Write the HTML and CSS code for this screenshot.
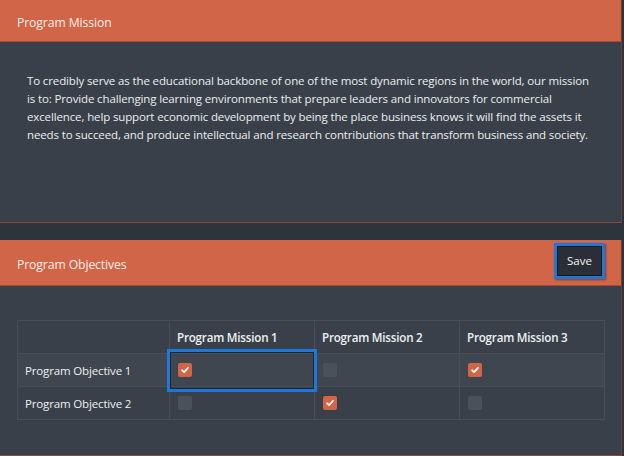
FILE: index.html
```html
<!DOCTYPE html>
<html>
<head>
<meta charset="utf-8">
<link rel="stylesheet" href="styles.css">
</head>
<body>
<div class="page">
  <section class="panel panel-mission">
    <header class="panel-head"><h2 class="panel-title">Program Mission</h2></header>
    <div class="panel-body mission-body">
      <p class="mission-text">To credibly serve as the educational backbone of one of the most dynamic regions in the world, our mission is to: Provide challenging learning environments that prepare leaders and innovators for commercial excellence, help support economic development by being the place business knows it will find the assets it needs to succeed, and produce intellectual and research contributions that transform business and society.</p>
    </div>
  </section>
  <section class="panel panel-objectives">
    <header class="panel-head head-with-btn">
      <h2 class="panel-title">Program Objectives</h2>
      <button class="save-btn">Save</button>
    </header>
    <div class="panel-body objectives-body">
      <table class="matrix">
        <thead>
          <tr>
            <th class="corner"></th>
            <th>Program Mission 1</th>
            <th>Program Mission 2</th>
            <th>Program Mission 3</th>
          </tr>
        </thead>
        <tbody>
          <tr class="row-alt">
            <td class="label">Program Objective 1</td>
            <td class="hl-cell"><span class="cb on"><svg viewBox="0 0 14 14"><path d="M4.2 7.3 L6.1 9.1 L9.9 5.0" /></svg></span><span class="highlight"></span></td>
            <td><span class="cb"></span></td>
            <td><span class="cb on"><svg viewBox="0 0 14 14"><path d="M4.2 7.3 L6.1 9.1 L9.9 5.0" /></svg></span></td>
          </tr>
          <tr>
            <td class="label">Program Objective 2</td>
            <td><span class="cb"></span></td>
            <td><span class="cb on"><svg viewBox="0 0 14 14"><path d="M4.2 7.3 L6.1 9.1 L9.9 5.0" /></svg></span></td>
            <td><span class="cb"></span></td>
          </tr>
        </tbody>
      </table>
    </div>
  </section>
</div>
</body>
</html>
```
FILE: styles.css
```css
* { box-sizing: border-box; }
html, body { margin: 0; padding: 0; }
body {
  background: #2e343c;
  font-family: "Open Sans", "Noto Sans", sans-serif;
  color: #eef0f2;
  width: 624px;
  height: 456px;
  overflow: hidden;
}
.page {
  display: flex;
  flex-direction: column;
  gap: 17px;
  width: 622px;
}
.panel {
  background: #394049;
  border-right: 1px solid #6b4137;
  border-bottom: 1px solid #8a4c3d;
}
.panel-head {
  background: #d16548;
  border-bottom: 1px solid #a44c36;
  display: flex;
  align-items: center;
  padding: 0 17px;
}
.panel-mission .panel-head { height: 42px; padding-top: 4px; }
.panel-title {
  margin: 0;
  font-size: 12.2px;
  letter-spacing: -0.1px;
  font-weight: 400;
  color: #fbeee9;
}
.head-with-btn {
  height: 46px;
  justify-content: space-between;
  padding-right: 17px;
  padding-top: 3px;
}
.save-btn {
  font-family: "Open Sans", "Noto Sans", sans-serif;
  font-size: 11.5px;
  color: #f2f3f4;
  background: #2a2f37;
  border: 3px solid #1f78d8;
  box-shadow: inset 0 0 0 1px #15181c, 1px 1px 2px rgba(0,0,0,0.4);
  width: 51px;
  height: 36px;
  padding: 0;
  margin-top: -7px;
  margin-right: -1px;
}
.mission-body {
  height: 180px;
  padding: 30px 27px 0 27px;
}
.mission-text {
  margin: 0;
  font-size: 11.5px;
  letter-spacing: -0.13px;
  line-height: 18px;
  color: #eceef0;
  width: 568px;
}
.objectives-body {
  height: 169px;
  padding: 34px 17px 0 17px;
}
.matrix {
  border-collapse: collapse;
  width: 588px;
  table-layout: fixed;
}
.matrix th, .matrix td {
  border: 1px solid #474e58;
  height: 33px;
  text-align: left;
  padding: 0 7px;
  font-size: 11.5px;
  letter-spacing: -0.15px;
  color: #eef0f2;
  vertical-align: middle;
}
.matrix th {
  font-weight: 600;
  font-size: 11.6px;
  letter-spacing: -0.2px;
}
.matrix th.corner { width: 152px; }
.matrix th:not(.corner) { width: 145px; }
.matrix td { padding-left: 8px; }
.matrix td.label { padding-left: 7px; }
.row-alt td { background: #40464f; }
.cb {
  display: block;
  width: 14px;
  height: 14px;
  border-radius: 2px;
  background: #4a515b;
}
.cb.on { background: #d16548; }
.cb svg {
  display: block;
  width: 14px;
  height: 14px;
}
.cb svg path {
  fill: none;
  stroke: #ffffff;
  stroke-width: 1.8;
  stroke-linecap: round;
  stroke-linejoin: round;
}
.hl-cell { position: relative; }
.highlight {
  position: absolute;
  left: -3px;
  top: -5px;
  width: 150px;
  height: 43px;
  border: 3px solid #1f78d8;
  box-shadow: inset 0 0 0 1px #20252b;
  pointer-events: none;
}
```
